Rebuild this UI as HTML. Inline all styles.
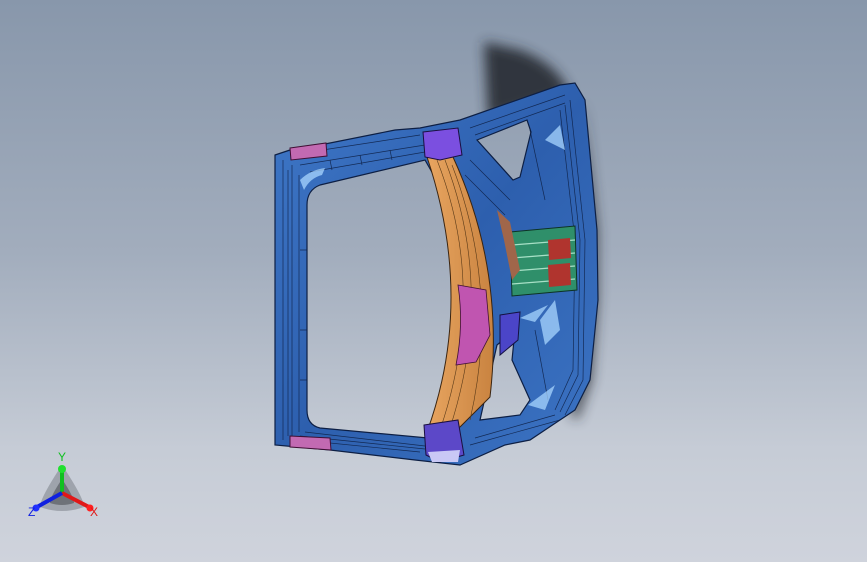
<!DOCTYPE html><html><head><style>
html,body{margin:0;padding:0}
body{width:867px;height:562px;overflow:hidden;background:linear-gradient(#8897ab 0%,#a2adbd 45%,#c6ccd6 80%,#cfd3dc 100%);font-family:"Liberation Sans",sans-serif}
</style></head><body>
<svg width="867" height="562" viewBox="0 0 867 562" style="position:absolute;left:0;top:0">
<defs>
<filter id="b" x="-50%" y="-50%" width="200%" height="200%"><feGaussianBlur stdDeviation="6"/></filter>
<linearGradient id="bl" x1="0" y1="0" x2="1" y2="1"><stop offset="0" stop-color="#3f78c8"/><stop offset=".5" stop-color="#2d5fae"/><stop offset="1" stop-color="#3c74c4"/></linearGradient>
<linearGradient id="or" x1="0" y1="0" x2="1" y2="0"><stop offset="0" stop-color="#e8a560"/><stop offset="1" stop-color="#c98340"/></linearGradient>
</defs>
<path d="M484 42 L520 50 Q560 65 570 95 L488 120 L486 80 Z" fill="#262a33" opacity=".9" filter="url(#b)"/>
<path d="M583 100 L598 230 L598 300 L592 380 L578 420 L570 415 L585 300 Z" fill="#262a33" opacity=".7" filter="url(#b)"/>
<path fill-rule="evenodd" fill="url(#bl)" stroke="#0d1f44" stroke-width="1.2" d="M275 155 L290 150 L320 145 L395 130 L420 128 L460 120 L560 85 L575 83 L585 100 L597 230 L598 300 L590 380 L575 410 L548 428 L530 440 L505 445 L460 465 L415 460 L330 450 L275 445 Z
M320 185 L425 160 Q500 285 428 438 L320 428 Q307 425 307 410 L307 205 Q307 190 320 185 Z
M477 140 L527 120 L531 132 L520 177 L513 180 Z
M497 345 L515 330 L512 360 L530 400 L520 415 L480 420 Z"/>
<g fill="none" stroke="#0d1f44" stroke-width=".7" opacity=".85">
<path d="M283 160 L283 440 M292 165 L292 438 M299 175 L299 432 M288 170 L288 436"/>
<path d="M290 155 L420 135 M300 165 L425 145 M310 172 L425 152 M470 128 L565 95 M475 135 L565 103"/>
<path d="M300 440 L420 452 M305 432 L425 446 M300 436 L425 449 M470 445 L560 420 M475 438 L555 415"/>
<path d="M570 100 L585 240 L583 380 L565 415 M560 110 L575 240 L573 370 L555 410 M565 105 L580 240 L578 375 L560 412"/>
<path d="M470 160 L510 200 M465 175 L505 215 M530 130 L545 200 M535 330 L548 400"/>
<path d="M330 160 L332 170 M360 155 L362 165 M390 150 L392 160 M300 250 L307 250 M300 330 L307 330 M300 380 L307 380"/>
</g>
<g fill="#a8d6ff" opacity=".75"><path d="M300 180 Q310 170 325 168 L322 175 Q310 178 304 190 Z"/><path d="M540 320 L555 300 L560 330 L545 345 Z"/><path d="M545 140 L560 125 L565 150 Z"/><path d="M520 318 L548 305 L535 322 Z"/><path d="M528 405 L555 385 L545 410 Z"/></g>
<path fill="url(#or)" stroke="#3a2410" stroke-width="1" d="M427 157 L453 157 Q505 270 490 397 L460 427 L427 432 Q475 300 427 157 Z"/>
<g stroke="#5a3a18" stroke-width=".6" fill="none"><path d="M437 160 Q488 290 440 430 M445 160 Q495 290 450 428 M452 165 Q500 290 470 420"/></g>
<path fill="#c055b0" stroke="#401035" stroke-width=".8" d="M458 285 L486 290 L490 335 L476 362 L456 365 Q464 325 458 285 Z"/>
<path fill="#7b4fe0" stroke="#1a0f40" d="M423 132 L458 128 L462 155 L440 160 L425 157 Z"/>
<path fill="#5c48c8" stroke="#1a0f40" d="M424 425 L458 420 L464 455 L440 462 L426 455 Z"/>
<path fill="#c9c8f5" d="M428 452 L460 450 L458 462 L432 462 Z"/>
<path fill="#2f8f6a" stroke="#0d3324" d="M510 232 L575 226 L577 290 L512 296 Z"/>
<g stroke="#a7e0c6" stroke-width="1.3"><path d="M512 245 L575 240 M512 258 L575 253 M512 271 L575 266 M512 284 L575 279"/></g>
<path fill="#b0342e" d="M548 240 L570 238 L571 258 L549 260 Z M548 265 L570 263 L571 285 L549 287 Z"/>
<path fill="#a0664a" d="M497 210 L510 222 L520 270 L512 280 L504 240 Z"/>
<path fill="#4b45c8" stroke="#141040" d="M500 315 L520 312 L518 340 L500 355 Z"/>
<path fill="#c26ab2" stroke="#401035" d="M290 148 L326 143 L327 156 L291 160 Z M290 436 L330 438 L331 450 L290 447 Z"/>
<g transform="translate(62,493)">
<path d="M0 -28 Q22 5 22 14 Q0 22 -22 14 Q-22 5 0 -28 Z" fill="#6b6e78" opacity=".45"/>
<path d="M0 -14 Q12 4 12 10 Q0 14 -12 10 Q-12 4 0 -14 Z" fill="#3d3f46" opacity=".5"/>
<line x1="0" y1="0" x2="0" y2="-22" stroke="#10c020" stroke-width="4"/>
<ellipse cx="0" cy="-24" rx="4" ry="4" fill="#20e030"/>
<line x1="0" y1="0" x2="27" y2="14" stroke="#e01818" stroke-width="4"/>
<circle cx="28" cy="15" r="3.5" fill="#ff2020"/>
<line x1="0" y1="0" x2="-25" y2="14" stroke="#1020e0" stroke-width="4"/>
<circle cx="-26" cy="15" r="3.5" fill="#2030ff"/>
</g>
<text x="58" y="461" font-size="12" fill="#10c020" font-family="Liberation Sans">Y</text>
<text x="90" y="516" font-size="12" fill="#e01818" font-family="Liberation Sans">X</text>
<text x="28" y="516" font-size="12" fill="#1020e0" font-family="Liberation Sans">Z</text>
</svg>
</body></html>
